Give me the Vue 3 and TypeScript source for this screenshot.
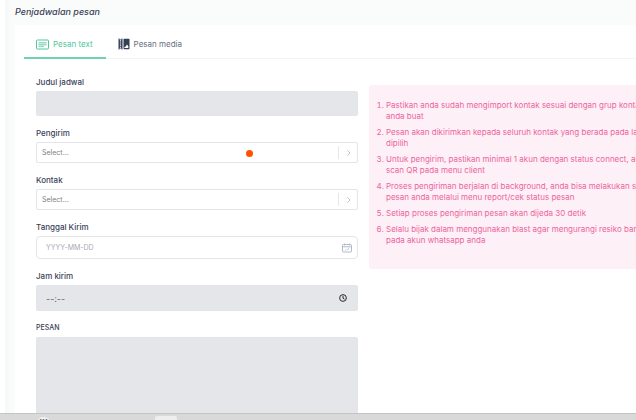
<script setup lang="ts">
import { ref } from 'vue'

type Tab = 'text' | 'media'

const activeTab = ref<Tab>('text')
const title = ref('')
const sender = ref('')
const contact = ref('')
const date = ref('')
const time = ref('')
const message = ref('')

const notes: string[][] = [
  ['Pastikan anda sudah mengimport kontak sesuai dengan grup kontak', 'anda buat'],
  ['Pesan akan dikirimkan kepada seluruh kontak yang berada pada label', 'dipilih'],
  ['Untuk pengirim, pastikan minimal 1 akun dengan status connect, anda', 'scan QR pada menu client'],
  ['Proses pengiriman berjalan di background, anda bisa melakukan status', 'pesan anda melalui menu report/cek status pesan'],
  ['Setiap proses pengiriman pesan akan dijeda 30 detik'],
  ['Selalu bijak dalam menggunakan blast agar mengurangi resiko banned', 'pada akun whatsapp anda'],
]
</script>

<template>
  <div class="screen">
    <main class="page">
      <h1 class="title">Penjadwalan pesan</h1>
      <section class="card">
        <nav class="tabs">
          <button type="button" class="tab" :class="{ active: activeTab === 'text' }" @click="activeTab = 'text'">
            <svg class="tab-icon" viewBox="0 0 13 11" width="13" height="11" aria-hidden="true">
              <rect x="0.5" y="1" width="12" height="9" rx="0.8" fill="none" stroke="currentColor" />
              <path d="M2.5 3h8v3.8h-8zM2.5 6.8h5.5v1.4h-5.5z" fill="currentColor" opacity="0.35" />
              <path d="M2.5 3.5h8M2.5 5.5h8M2.5 7.5h5.5" stroke="currentColor" stroke-width="0.7" opacity="0.6" />
            </svg>
            <span>Pesan text</span>
          </button>
          <button type="button" class="tab" :class="{ active: activeTab === 'media' }" @click="activeTab = 'media'">
            <svg class="tab-icon" viewBox="0 0 12 12" width="12" height="12" aria-hidden="true">
              <path fill="#323f54" d="M0.5 0.5h1v1h2v-1h1v11h-1v-1h-2v1h-1z" />
              <path fill="#fff" d="M1.9 2.2h1.2v1.2H1.9zM1.9 4.4h1.2v1.2H1.9zM1.9 6.6h1.2v1.2H1.9zM1.9 8.8h1.2v1H1.9z" />
              <path fill="#323f54" d="M6.2 0.7h4.6q.7 0 .7.7v9.2q0 .7-.7.7H6.2q-.7 0-.7-.7V1.4q0-.7.7-.7z" />
              <path fill="#fff" d="M6.4 10V8.9l1.3-.3 1.3-2.1 1.3 1.8V10z" />
            </svg>
            <span>Pesan media</span>
          </button>
        </nav>

        <div class="content">
          <form class="form" @submit.prevent>
            <div class="field">
              <label for="title">Judul jadwal</label>
              <input id="title" v-model="title" class="control filled" type="text" />
            </div>
            <div class="field">
              <label for="sender">Pengirim</label>
              <div class="wrap">
                <select id="sender" v-model="sender" class="control select">
                  <option value="">Select...</option>
                </select>
                <span class="arrow">
                  <svg viewBox="0 0 6 8" width="6" height="8" aria-hidden="true"><path d="M1.5 1.5 4 4 1.5 6.5" /></svg>
                </span>
                <span class="pointer"></span>
              </div>
            </div>
            <div class="field">
              <label for="contact">Kontak</label>
              <div class="wrap">
                <select id="contact" v-model="contact" class="control select">
                  <option value="">Select...</option>
                </select>
                <span class="arrow">
                  <svg viewBox="0 0 6 8" width="6" height="8" aria-hidden="true"><path d="M1.5 1.5 4 4 1.5 6.5" /></svg>
                </span>
              </div>
            </div>
            <div class="field">
              <label for="date">Tanggal Kirim</label>
              <div class="wrap">
                <input id="date" v-model="date" class="control date" type="text" placeholder="YYYY-MM-DD" />
                <svg class="field-icon calendar" viewBox="0 0 10 10" width="10" height="10" aria-hidden="true">
                  <rect x="0.5" y="1.5" width="9" height="7.5" rx="0.8" />
                  <path d="M2.5 0.5v2M7.5 0.5v2M0.5 3.8h9" />
                  <path d="M3 7h1.5M5 6.5l2-1" stroke-width="0.8" />
                </svg>
              </div>
            </div>
            <div class="field">
              <label for="time">Jam kirim</label>
              <div class="wrap">
                <input id="time" v-model="time" class="control filled time" type="text" placeholder="--:--" />
                <svg class="field-icon clock" viewBox="0 0 10 10" width="8" height="8" aria-hidden="true">
                  <circle cx="5" cy="5" r="4.2" />
                  <path d="M5 2.3V5.2l1.9 1.2" />
                </svg>
              </div>
            </div>
            <div class="field">
              <label for="message" class="small">PESAN</label>
              <textarea id="message" v-model="message" class="control filled message"></textarea>
            </div>
          </form>

          <aside class="info">
            <ol>
              <li v-for="(note, i) in notes" :key="i">
                <span v-for="line in note" :key="line" class="line">{{ line }}</span>
              </li>
            </ol>
          </aside>
        </div>
      </section>
    </main>
    <footer class="taskbar">
      <span class="badge">•••</span>
      <span class="window"></span>
    </footer>
  </div>
</template>

<style>
body {
  margin: 0;
  overflow: hidden;
}
</style>

<style scoped>
* {
  box-sizing: border-box;
}

.screen {
  display: flex;
  flex-direction: column;
  height: 100vh;
  overflow: hidden;
  background: #fff;
  color: #3b4257;
  font: 8px/12px Inter, "Liberation Sans", sans-serif;
}

.page {
  flex: 1;
  min-height: 0;
  overflow: hidden;
  margin-left: 5px;
  padding-left: 10px;
  background: linear-gradient(to right, #f5f8f7, #fafcfb 6px);
}

.title {
  margin: 0;
  padding: 6px 0 7px;
  font-size: 9px;
  line-height: 12px;
  font-weight: 500;
  font-style: italic;
}

.card {
  min-height: 100%;
  padding-left: 9px;
  background: #fff;
}

.tabs {
  display: flex;
  height: 34px;
  box-shadow: inset 0 -1px #f1f3f4;
}

.tab {
  display: flex;
  align-items: center;
  gap: 4px;
  padding: 6px 13px 0 12px;
  border: 0;
  border-bottom: 2px solid transparent;
  background: none;
  color: #687083;
  font: inherit;
}

.tab.active {
  border-color: #6ed3ae;
  color: #4fc99d;
}

.tab-icon {
  flex: none;
}

.content {
  display: grid;
  grid-template-columns: minmax(0, 322fr) minmax(0, 267fr);
  align-items: start;
  gap: 11px;
  padding: 17px 0 0 12px;
}

.form {
  display: flex;
  flex-direction: column;
  gap: 11px;
}

.field {
  display: flex;
  flex-direction: column;
  gap: 3px;
}

label {
  font-weight: 500;
}

label.small {
  font-size: 7px;
}

.wrap {
  display: flex;
  position: relative;
}

.control {
  display: block;
  width: 100%;
  height: 25px;
  margin: 0;
  padding: 0 9px;
  border: 1px solid #e3e5e9;
  border-radius: 2px;
  outline: 0;
  background: #fff;
  color: #808080;
  font: inherit;
  font-size: 7px;
  resize: none;
}

.control.filled {
  background: #e5e6ea;
}

.control.select {
  height: 21px;
  padding: 0 5px;
  appearance: none;
}

.control.date {
  height: 23px;
  border-radius: 4px;
}

.control.time {
  height: 26px;
  font-size: 9px;
}

.control.message {
  height: 90px;
}

.control::placeholder {
  color: #a5a9b5;
  opacity: 1;
}

.control.time::placeholder {
  color: #666b78;
}

.arrow {
  position: absolute;
  top: 4px;
  right: 0;
  bottom: 4px;
  display: flex;
  align-items: center;
  justify-content: center;
  width: 20px;
  border-left: 1px solid #e6e7e9;
  pointer-events: none;
}

.arrow svg {
  fill: none;
  stroke: #bfc2c8;
}

.pointer {
  position: absolute;
  top: 8px;
  left: 210px;
  width: 7px;
  height: 7px;
  border-radius: 50%;
  background: #ff5200;
  pointer-events: none;
}

.field-icon {
  position: absolute;
  align-self: center;
  fill: none;
  pointer-events: none;
}

.calendar {
  right: 6px;
  stroke: #b3bac6;
}

.clock {
  right: 11px;
  stroke: #222;
  stroke-width: 1.2;
}

.info {
  margin-top: 9px;
  padding: 15px 0 23px 17px;
  overflow: hidden;
  border-radius: 3px 0 0 3px;
  background: #fdf0f6;
  color: #ed64a0;
  line-height: 11px;
  white-space: nowrap;
}

.info ol {
  display: flex;
  flex-direction: column;
  gap: 5px;
  margin: 0;
  padding: 0;
}

.line {
  display: block;
}

.taskbar {
  display: flex;
  flex: none;
  align-items: flex-start;
  gap: 105px;
  height: 7px;
  padding: 2px 0 0 37px;
  overflow: hidden;
  border-top: 1px solid #c4c4c4;
  background: #d9d9d9;
}

.badge {
  width: 13px;
  height: 12px;
  margin-top: 1px;
  border-radius: 6px;
  background: #f1f1f1;
  color: #666;
  font-size: 5px;
  line-height: 5px;
  text-align: center;
}

.window {
  width: 22px;
  height: 8px;
  border-radius: 2px;
  background: #eee;
}
</style>
